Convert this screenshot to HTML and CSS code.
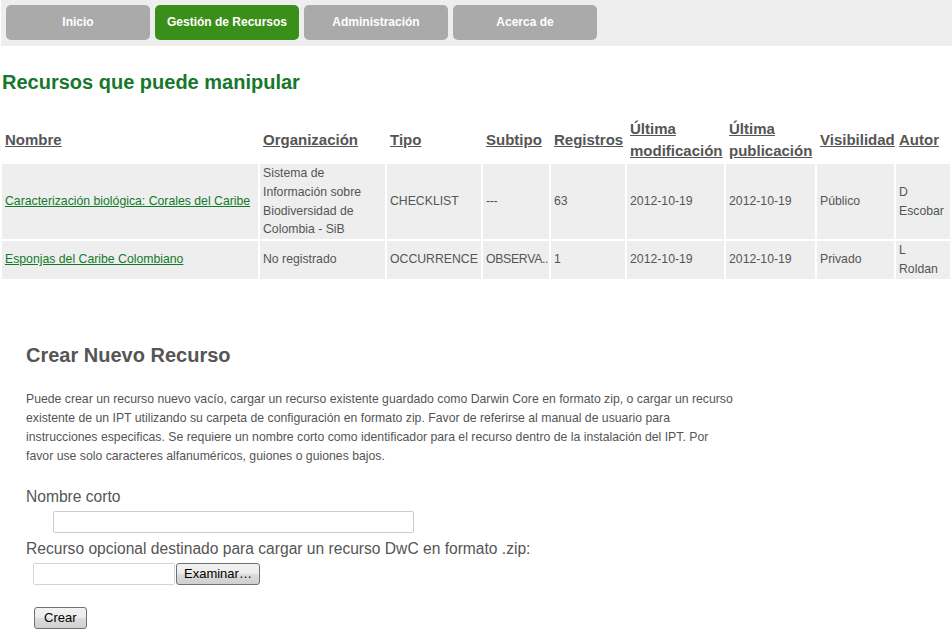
FILE: index.html
```html
<!DOCTYPE html>
<html lang="es">
<head>
<meta charset="utf-8">
<title>Gestión de Recursos</title>
<link rel="stylesheet" href="styles.css">
</head>
<body>
<nav class="nav">
  <a class="tab" href="#">Inicio</a>
  <a class="tab active" href="#">Gestión de Recursos</a>
  <a class="tab" href="#">Administración</a>
  <a class="tab" href="#">Acerca de</a>
</nav>

<h1 class="title">Recursos que puede manipular</h1>

<table class="resources">
  <colgroup>
    <col class="c1"><col class="c2"><col class="c3"><col class="c4"><col class="c5"><col class="c6"><col class="c7"><col class="c8"><col class="c9">
  </colgroup>
  <thead>
    <tr>
      <th><a href="#">Nombre</a></th>
      <th><a href="#">Organización</a></th>
      <th><a href="#">Tipo</a></th>
      <th><a href="#">Subtipo</a></th>
      <th><a href="#">Registros</a></th>
      <th><a href="#">Última modificación</a></th>
      <th><a href="#">Última publicación</a></th>
      <th><a href="#">Visibilidad</a></th>
      <th><a href="#">Autor</a></th>
    </tr>
  </thead>
  <tbody>
    <tr>
      <td><a class="res" href="#">Caracterización biológica: Corales del Caribe</a></td>
      <td>Sistema de Información sobre Biodiversidad de Colombia - SiB</td>
      <td>CHECKLIST</td>
      <td class="subtype">---</td>
      <td>63</td>
      <td>2012-10-19</td>
      <td>2012-10-19</td>
      <td>Público</td>
      <td class="author">D Escobar</td>
    </tr>
    <tr>
      <td><a class="res" href="#">Esponjas del Caribe Colombiano</a></td>
      <td>No registrado</td>
      <td>OCCURRENCE</td>
      <td class="subtype">OBSERVA..</td>
      <td>1</td>
      <td>2012-10-19</td>
      <td>2012-10-19</td>
      <td>Privado</td>
      <td class="author">L Roldan</td>
    </tr>
  </tbody>
</table>

<section class="create">
  <h2 class="create-title">Crear Nuevo Recurso</h2>
  <p class="intro">Puede crear un recurso nuevo vacío, cargar un recurso existente guardado como Darwin Core en formato zip, o cargar un recurso existente de un IPT utilizando su carpeta de configuración en formato zip. Favor de referirse al manual de usuario para instrucciones especificas. Se requiere un nombre corto como identificador para el recurso dentro de la instalación del IPT. Por favor use solo caracteres alfanuméricos, guiones o guiones bajos.</p>
  <label class="label" for="shortname">Nombre corto</label>
  <input class="text-input" id="shortname" type="text">
  <label class="label" for="file">Recurso opcional destinado para cargar un recurso DwC en formato .zip:</label>
  <div class="file-row">
    <input class="file-text" id="file" type="text">
    <button class="btn btn-browse" type="button">Examinar…</button>
  </div>
  <div class="submit-row">
    <button class="btn" type="button">Crear</button>
  </div>
</section>
</body>
</html>
```

FILE: styles.css
```css
html, body {
  margin: 0;
  padding: 0;
  background: #fff;
}

body {
  font-family: "Liberation Sans", Arial, sans-serif;
  color: #555;
  width: 952px;
}

.nav {
  margin-left: 1px;
  background: #eeeeee;
  padding: 5px 0 6px 5px;
  display: flex;
  gap: 5px;
}

.tab {
  width: 144px;
  height: 35px;
  line-height: 35px;
  border-radius: 5px;
  background: #aaaaaa;
  color: #ffffff;
  font-size: 12px;
  font-weight: bold;
  text-align: center;
  text-decoration: none;
}

.tab.active {
  background: #3a8f1a;
}

.title {
  margin: 24px 0 22px 2px;
  font-size: 20px;
  line-height: 24px;
  font-weight: bold;
  color: #17772b;
}

.resources {
  width: 952px;
  table-layout: fixed;
  border-collapse: separate;
  border-spacing: 2px;
  font-size: 12.25px;
}

.c1 { width: 256px; }
.c2 { width: 125px; }
.c3 { width: 94px; }
.c4 { width: 66px; }
.c5 { width: 74px; }
.c6 { width: 97px; }
.c7 { width: 89px; }
.c8 { width: 77px; }
.c9 { width: 54px; }

.resources th {
  text-align: left;
  vertical-align: middle;
  font-size: 15px;
  line-height: 22px;
  padding: 0 3px;
}

.resources th a {
  color: #555;
  text-decoration: underline;
}

.resources td {
  background: #eeeeee;
  padding: 0 3px;
  line-height: 18.75px;
  vertical-align: middle;
  color: #555;
  overflow: hidden;
}

.resources td.subtype {
  padding: 0 0 0 3px;
  letter-spacing: -0.3px;
  white-space: nowrap;
}

.resources td.author {
  padding-right: 6px;
}

.res {
  color: #137a2a;
  text-decoration: underline;
}

.create {
  padding-left: 26px;
}

.create-title {
  margin: 62px 0 23px;
  font-size: 20px;
  line-height: 24px;
  font-weight: bold;
  color: #555;
}

.intro {
  margin: 0 0 21px;
  width: 712px;
  font-size: 12.25px;
  line-height: 19px;
  color: #555;
}

.label {
  display: block;
  font-size: 15.6px;
  line-height: 20px;
  color: #555;
}

.text-input {
  display: block;
  box-sizing: border-box;
  margin: 4px 0 6px 27px;
  width: 361px;
  height: 22px;
  border: 1px solid #cccccc;
  border-radius: 2px;
  background: #fff;
  padding: 0 3px;
}

.file-row {
  display: flex;
  align-items: stretch;
  margin: 4px 0 0 7px;
  height: 22px;
}

.file-text {
  box-sizing: border-box;
  width: 142px;
  height: 22px;
  border: 1px solid #d4d4d4;
  border-radius: 2px;
  background: #fff;
  padding: 0 3px;
  margin: 0 1px 0 0;
}

.btn {
  box-sizing: border-box;
  height: 22px;
  padding: 0 9px;
  border: 1px solid #707070;
  border-radius: 3px;
  background: linear-gradient(#f2f2f2 0%, #ebebeb 50%, #dddddd 51%, #cfcfcf 100%);
  font-family: "Liberation Sans", Arial, sans-serif;
  font-size: 13px;
  color: #000;
  line-height: 20px;
}

.btn-browse {
  padding: 0 7px;
}

.submit-row {
  margin: 22px 0 0 8px;
}
```
